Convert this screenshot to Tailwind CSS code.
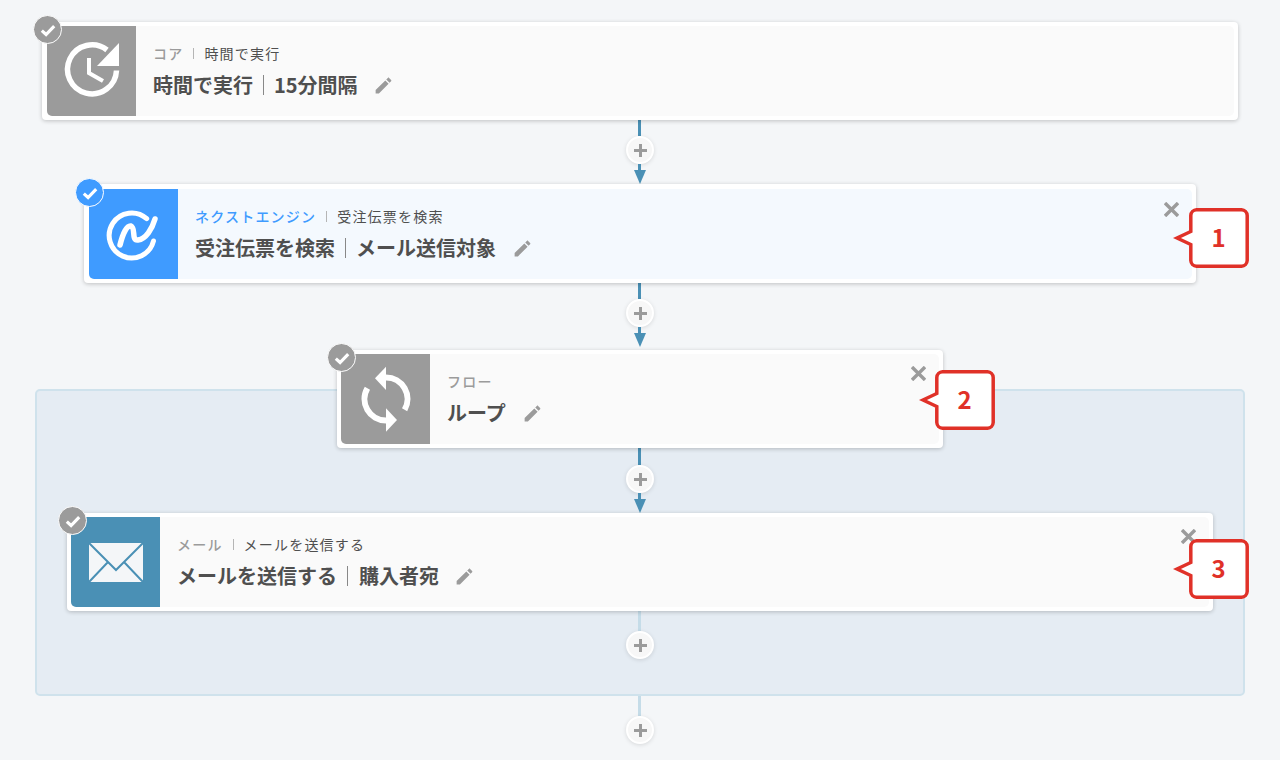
<!DOCTYPE html>
<html lang="ja">
<head>
  <meta charset="UTF-8" />
  <title>フロー</title>
  <script src="https://cdn.jsdelivr.net/npm/@tailwindcss/browser@4"></script>
</head>
<body class="h-[760px] overflow-hidden bg-[#f4f6f8] font-['Noto_Sans_CJK_JP','Noto_Sans',sans-serif] text-[#4f4f4f]">
<main class="flex flex-col items-center pt-[22px]">

  <!-- 時間で実行 -->
  <section class="relative z-10 h-[98px] w-[1196px] rounded-[4px] bg-white py-1 pl-[5px] pr-1 shadow-[0_1px_4px_rgba(0,0,0,0.22)]">
    <div class="flex h-full overflow-hidden rounded-[5px] bg-[#fafafa]">
      <div class="w-[89px] shrink-0 bg-[#9b9b9b]">
        <svg viewBox="0 0 89 90" class="h-full w-full" fill="none" stroke="#fff">
          <path d="M60 24A24.500 24.500 0 1 0 69.500 44.500" stroke-width="5.500" />
          <path d="M72 17V40H50z" fill="#fff" stroke="none" />
          <path d="M42 32V47L56 55" stroke-width="4" />
        </svg>
      </div>
      <div class="pl-[17px] pt-[17px]">
        <p class="flex h-5 items-center text-[14px] tracking-[1.2px]"><span class="font-medium text-[#9b9b9b]">コア</span><i class="mx-[10px] h-[11px] w-px bg-[#b5b5b5]"></i><span>時間で実行</span></p>
        <p class="mt-[7px] flex h-[30px] items-center text-[20px] font-bold">時間で実行<i class="ml-[10px] mr-[10px] h-5 w-px bg-[#888]"></i>15分間隔
          <svg viewBox="0 0 24 24" class="ml-[15px] h-[21px] w-[21px]" fill="#9b9b9b"><path d="M3 17.25V21h3.75L17.81 9.94l-3.75-3.75L3 17.25zM20.71 7.04c.39-.39.39-1.02 0-1.41l-2.34-2.34c-.39-.39-1.02-.39-1.41 0l-1.83 1.83 3.75 3.75 1.83-1.83z" /></svg>
        </p>
      </div>
    </div>
    <div class="absolute -left-[9px] -top-[7px] flex h-[29px] w-[29px] items-center justify-center rounded-full border border-white bg-[#9b9b9b]">
      <svg viewBox="0 0 16 16" class="h-[18px] w-[18px]" fill="none" stroke="#fff" stroke-width="2.8"><path d="M2.5 8.5 6.300 12 13.500 4.500" /></svg>
    </div>
  </section>

  <!-- 接続 1 -->
  <div class="flex h-[64px] flex-col items-center">
    <div class="-ml-px h-4 w-[3px] bg-[#4a90b5]"></div>
    <div class="flex h-7 w-7 items-center justify-center rounded-full border-2 border-white bg-[#f7f7f7] shadow-[0_1px_4px_rgba(0,0,0,0.12)]">
      <svg viewBox="0 0 13 13" class="h-[13px] w-[13px] shrink-0" stroke="#9b9b9b" stroke-width="3"><path d="M6.5 0V13M0 6.5H13" /></svg>
    </div>
    <div class="-ml-px h-[6px] w-[3px] bg-[#4a90b5]"></div>
    <svg viewBox="0 0 12 14" class="h-[14px] w-3" fill="#4a90b5"><path d="M0 0H12L6 14z" /></svg>
  </div>

  <!-- 受注伝票を検索 -->
  <section class="relative z-10 h-[99px] w-[1112px] rounded-[4px] bg-white pb-1 pl-[5px] pr-1 pt-[5px] shadow-[0_1px_4px_rgba(0,0,0,0.22)]">
    <div class="flex h-full overflow-hidden rounded-[5px] bg-[#f4f9fe]">
      <div class="w-[89px] shrink-0 bg-[#3f9bff]">
        <svg viewBox="0 0 89 90" class="h-full w-full" fill="none" stroke="#fff" stroke-width="5" stroke-linecap="round">
          <path d="M64.500 52A22.500 22.500 0 1 1 57.700 29.700" />
          <path d="M31 56C34 44 38 36 42 37C47 39 42 52 49 51C57 50 63 40 66 30" stroke-width="5.500" />
        </svg>
      </div>
      <div class="pl-[17px] pt-[17px]">
        <p class="flex h-5 items-center text-[14px] tracking-[1.2px]"><span class="font-medium text-[#3f9bff]">ネクストエンジン</span><i class="mx-[10px] h-[11px] w-px bg-[#b5b5b5]"></i><span>受注伝票を検索</span></p>
        <p class="mt-[7px] flex h-[30px] items-center text-[20px] font-bold">受注伝票を検索<i class="ml-[10px] mr-[10px] h-5 w-px bg-[#888]"></i>メール送信対象
          <svg viewBox="0 0 24 24" class="ml-4 h-[21px] w-[21px]" fill="#9b9b9b"><path d="M3 17.25V21h3.75L17.81 9.94l-3.75-3.75L3 17.25zM20.71 7.04c.39-.39.39-1.02 0-1.41l-2.34-2.34c-.39-.39-1.02-.39-1.41 0l-1.83 1.83 3.75 3.75 1.83-1.83z" /></svg>
        </p>
      </div>
    </div>
    <div class="absolute -left-[9px] -top-[6px] flex h-[29px] w-[29px] items-center justify-center rounded-full border border-white bg-[#3f9bff]">
      <svg viewBox="0 0 16 16" class="h-[18px] w-[18px]" fill="none" stroke="#fff" stroke-width="2.8"><path d="M2.5 8.5 6.300 12 13.500 4.500" /></svg>
    </div>
    <svg viewBox="0 0 15 15" class="absolute right-[17px] top-[18px] h-[15px] w-[15px]" stroke="#9b9b9b" stroke-width="3.4"><path d="M1 1 14 14M14 1 1 14" /></svg>
    <div class="absolute -right-[53px] top-6 h-[60px] w-[76px]">
      <svg viewBox="0 0 76 60" class="h-full w-full" fill="#fff" stroke="#e03128" stroke-width="3.500"><path d="M23.500 1.800H68.500A6 6 0 0 1 74.200 7.500V52.500A6 6 0 0 1 68.500 58.200H23.500A6 6 0 0 1 17.800 52.500V36.500L4 30 17.800 23.500V7.500A6 6 0 0 1 23.500 1.800Z" /></svg>
      <span class="absolute inset-y-0 left-[15px] right-0 flex items-center justify-center pb-[3px] text-[24px] font-bold text-[#e03128]">1</span>
    </div>
  </section>

  <!-- 接続 2 -->
  <div class="flex h-[67px] flex-col items-center">
    <div class="-ml-px h-4 w-[3px] bg-[#4a90b5]"></div>
    <div class="flex h-7 w-7 items-center justify-center rounded-full border-2 border-white bg-[#f7f7f7] shadow-[0_1px_4px_rgba(0,0,0,0.12)]">
      <svg viewBox="0 0 13 13" class="h-[13px] w-[13px] shrink-0" stroke="#9b9b9b" stroke-width="3"><path d="M6.5 0V13M0 6.5H13" /></svg>
    </div>
    <div class="-ml-px h-[6px] w-[3px] bg-[#4a90b5]"></div>
    <svg viewBox="0 0 12 14" class="h-[14px] w-3" fill="#4a90b5"><path d="M0 0H12L6 14z" /></svg>
  </div>

  <!-- ループ -->
  <section class="relative z-10 h-[98px] w-[606px] rounded-[4px] bg-white p-1 shadow-[0_1px_4px_rgba(0,0,0,0.22)]">
    <div class="flex h-full overflow-hidden rounded-[5px] bg-[#fafafa]">
      <div class="w-[89px] shrink-0 bg-[#9b9b9b]">
        <svg viewBox="0 0 89 90" class="h-full w-full" fill="none" stroke="#fff" stroke-width="6">
          <path d="M45 23.500A21.500 21.500 0 0 1 63.600 55.800" />
          <path d="M45 66.500A21.500 21.500 0 0 1 26.400 34.200" />
          <path d="M45 12.700V36L34 24.300z" fill="#fff" stroke="none" />
          <path d="M56 66 45 54.300V77.700z" fill="#fff" stroke="none" />
        </svg>
      </div>
      <div class="pl-[17px] pt-[17px]">
        <p class="flex h-5 items-center text-[14px] tracking-[1.2px]"><span class="font-medium text-[#9b9b9b]">フロー</span></p>
        <p class="mt-[7px] flex h-[30px] items-center text-[20px] font-bold">ループ
          <svg viewBox="0 0 24 24" class="ml-4 h-[21px] w-[21px]" fill="#9b9b9b"><path d="M3 17.25V21h3.75L17.81 9.94l-3.75-3.75L3 17.25zM20.71 7.04c.39-.39.39-1.02 0-1.41l-2.34-2.34c-.39-.39-1.02-.39-1.41 0l-1.83 1.83 3.75 3.75 1.83-1.83z" /></svg>
        </p>
      </div>
    </div>
    <div class="absolute -left-[10px] -top-[7px] flex h-[29px] w-[29px] items-center justify-center rounded-full border border-white bg-[#9b9b9b]">
      <svg viewBox="0 0 16 16" class="h-[18px] w-[18px]" fill="none" stroke="#fff" stroke-width="2.8"><path d="M2.5 8.5 6.300 12 13.500 4.500" /></svg>
    </div>
    <svg viewBox="0 0 15 15" class="absolute right-[17px] top-4 h-[15px] w-[15px]" stroke="#9b9b9b" stroke-width="3.4"><path d="M1 1 14 14M14 1 1 14" /></svg>
    <div class="absolute -right-[52px] top-5 h-[60px] w-[76px]">
      <svg viewBox="0 0 76 60" class="h-full w-full" fill="#fff" stroke="#e03128" stroke-width="3.500"><path d="M23.500 1.800H68.500A6 6 0 0 1 74.200 7.500V52.500A6 6 0 0 1 68.500 58.200H23.500A6 6 0 0 1 17.800 52.500V36.500L4 30 17.800 23.500V7.500A6 6 0 0 1 23.500 1.800Z" /></svg>
      <span class="absolute inset-y-0 left-[15px] right-0 flex items-center justify-center pb-[3px] text-[24px] font-bold text-[#e03128]">2</span>
    </div>
  </section>

  <!-- ループの枠 -->
  <div class="-mt-[59px] flex h-[307px] w-[1210px] flex-col items-center rounded-[5px] border-2 border-[#cfe2ec] bg-[#e5ecf3] pt-[57px]">

    <!-- 接続 3 -->
    <div class="flex h-[65px] flex-col items-center">
      <div class="-ml-px h-[17px] w-[3px] bg-[#4a90b5]"></div>
      <div class="flex h-7 w-7 items-center justify-center rounded-full border-2 border-white bg-[#f7f7f7] shadow-[0_1px_4px_rgba(0,0,0,0.12)]">
        <svg viewBox="0 0 13 13" class="h-[13px] w-[13px] shrink-0" stroke="#9b9b9b" stroke-width="3"><path d="M6.5 0V13M0 6.5H13" /></svg>
      </div>
      <div class="-ml-px h-[6px] w-[3px] bg-[#4a90b5]"></div>
      <svg viewBox="0 0 12 14" class="h-[14px] w-3" fill="#4a90b5"><path d="M0 0H12L6 14z" /></svg>
    </div>

    <!-- メールを送信する -->
    <section class="relative h-[98px] w-[1146px] shrink-0 rounded-[4px] bg-white p-1 shadow-[0_1px_4px_rgba(0,0,0,0.22)]">
      <div class="flex h-full overflow-hidden rounded-[5px] bg-[#fafafa]">
        <div class="w-[89px] shrink-0 bg-[#4a90b5]">
          <svg viewBox="0 0 89 90" class="h-full w-full" fill="#f4f6f8" stroke="none">
            <path d="M18 26H72V65H18z" />
            <path d="M18 26 45 53 72 26M18 65 37 45M72 65 53 45" fill="none" stroke="#4a90b5" stroke-width="2" />
          </svg>
        </div>
        <div class="pl-[17px] pt-[17px]">
          <p class="flex h-5 items-center text-[14px] tracking-[1.2px]"><span class="font-medium text-[#9b9b9b]">メール</span><i class="mx-[10px] h-[11px] w-px bg-[#b5b5b5]"></i><span>メールを送信する</span></p>
          <p class="mt-[7px] flex h-[30px] items-center text-[20px] font-bold">メールを送信する<i class="ml-[10px] mr-[11px] h-5 w-px bg-[#888]"></i>購入者宛
            <svg viewBox="0 0 24 24" class="ml-[15px] h-[21px] w-[21px]" fill="#9b9b9b"><path d="M3 17.25V21h3.75L17.81 9.94l-3.75-3.75L3 17.25zM20.71 7.04c.39-.39.39-1.02 0-1.41l-2.34-2.34c-.39-.39-1.02-.39-1.41 0l-1.83 1.83 3.75 3.75 1.83-1.83z" /></svg>
          </p>
        </div>
      </div>
      <div class="absolute -left-[9px] -top-[7px] flex h-[29px] w-[29px] items-center justify-center rounded-full border border-white bg-[#9b9b9b]">
        <svg viewBox="0 0 16 16" class="h-[18px] w-[18px]" fill="none" stroke="#fff" stroke-width="2.8"><path d="M2.5 8.5 6.300 12 13.500 4.500" /></svg>
      </div>
      <svg viewBox="0 0 15 15" class="absolute right-[17px] top-4 h-[15px] w-[15px]" stroke="#9b9b9b" stroke-width="3.4"><path d="M1 1 14 14M14 1 1 14" /></svg>
      <div class="absolute -right-[36px] top-[26px] h-[60px] w-[76px]">
        <svg viewBox="0 0 76 60" class="h-full w-full" fill="#fff" stroke="#e03128" stroke-width="3.500"><path d="M23.500 1.800H68.500A6 6 0 0 1 74.200 7.500V52.500A6 6 0 0 1 68.500 58.200H23.500A6 6 0 0 1 17.800 52.500V36.500L4 30 17.800 23.500V7.500A6 6 0 0 1 23.500 1.800Z" /></svg>
        <span class="absolute inset-y-0 left-[15px] right-0 flex items-center justify-center pb-[3px] text-[24px] font-bold text-[#e03128]">3</span>
      </div>
    </section>

    <!-- 接続 4 -->
    <div class="flex flex-col items-center">
      <div class="-ml-px h-5 w-[3px] bg-[#c5dce8]"></div>
      <div class="flex h-7 w-7 items-center justify-center rounded-full border-2 border-white bg-[#f7f7f7] shadow-[0_1px_4px_rgba(0,0,0,0.12)]">
        <svg viewBox="0 0 13 13" class="h-[13px] w-[13px] shrink-0" stroke="#9b9b9b" stroke-width="3"><path d="M6.5 0V13M0 6.5H13" /></svg>
      </div>
    </div>
  </div>

  <!-- 接続 5 -->
  <div class="flex flex-col items-center">
    <div class="-ml-px h-5 w-[3px] bg-[#c5dce8]"></div>
    <div class="flex h-7 w-7 items-center justify-center rounded-full border-2 border-white bg-[#f7f7f7] shadow-[0_1px_4px_rgba(0,0,0,0.12)]">
      <svg viewBox="0 0 13 13" class="h-[13px] w-[13px] shrink-0" stroke="#9b9b9b" stroke-width="3"><path d="M6.5 0V13M0 6.5H13" /></svg>
    </div>
  </div>

</main>
</body>
</html>
